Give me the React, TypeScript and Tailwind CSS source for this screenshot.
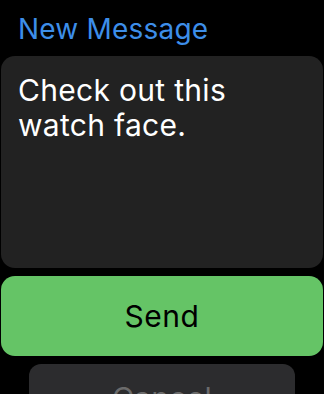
export default function App() {
  return (
    <div
      className="h-[394px] w-[324px] overflow-hidden bg-black"
      style={{ fontFamily: 'Inter, "Noto Sans", sans-serif' }}
    >
      <div className="pt-3 pl-[18px] text-[28px] leading-[34px] tracking-[0.2px] text-[#3d8ee9]">New Message</div>
      <div className="mx-px mt-[10px] h-[212px] rounded-[14px] bg-[#222222] pr-[30px] pl-[17px] pt-[17px] text-[30px] leading-[35px] tracking-[0.3px] text-white">
        Check out this watch face.
      </div>
      <button className="mx-px mt-2 flex h-[80px] w-[322px] items-center justify-center rounded-[14px] bg-[#65c466] text-[30px] tracking-[0.5px] text-black">
        Send
      </button>
      <button className="mx-auto mt-2 flex h-[68px] w-[266px] items-center justify-center rounded-[12px] bg-[#2c2c2e] text-[30px] tracking-[0.3px] text-[#6b6b6b]">
        Cancel
      </button>
    </div>
  )
}
